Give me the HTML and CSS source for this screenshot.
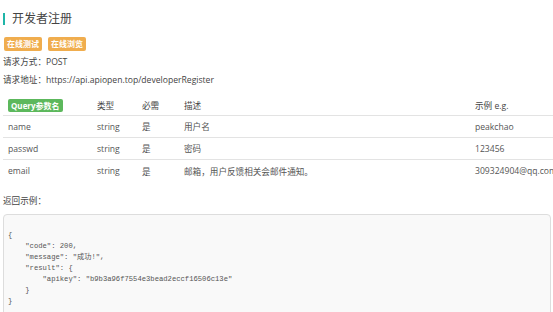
FILE: index.html
```html
<!DOCTYPE html>
<html lang="zh-CN">
<head>
    <meta charset="UTF-8">
    <meta name="viewport" content="width=device-width, initial-scale=1.0">
    <title>开发者注册</title>
    <link rel="stylesheet" href="styles.css">
</head>
<body>
    <h2 class="page-title">开发者注册</h2>

    <div class="badges">
        <span class="badge">在线测试</span>
        <span class="badge">在线浏览</span>
    </div>

    <p class="info-line">请求方式：POST</p>
    <p class="info-line">请求地址：https://api.apiopen.top/developerRegister</p>

    <table class="params-table">
        <colgroup>
            <col class="col-name">
            <col class="col-type">
            <col class="col-required">
            <col class="col-desc">
            <col class="col-example">
        </colgroup>
        <thead>
            <tr>
                <th><span class="query-label">Query参数名</span></th>
                <th>类型</th>
                <th>必需</th>
                <th>描述</th>
                <th>示例 e.g.</th>
            </tr>
        </thead>
        <tbody>
            <tr>
                <td>name</td>
                <td>string</td>
                <td>是</td>
                <td>用户名</td>
                <td>peakchao</td>
            </tr>
            <tr>
                <td>passwd</td>
                <td>string</td>
                <td>是</td>
                <td>密码</td>
                <td>123456</td>
            </tr>
            <tr>
                <td>email</td>
                <td>string</td>
                <td>是</td>
                <td>邮箱，用户反馈相关会邮件通知。</td>
                <td>309324904@qq.com</td>
            </tr>
        </tbody>
    </table>

    <p class="info-line return-title">返回示例：</p>

    <pre class="code-block">{
    "code": 200,
    "message": "成功!",
    "result": {
        "apikey": "b9b3a96f7554e3bead2eccf16506c13e"
    }
}</pre>
</body>
</html>
```

FILE: styles.css
```css
html, body {
    overflow: hidden;
}

body {
    margin: 0;
    padding: 0 0 0 3px;
    font-family: "Open Sans", "Noto Sans CJK SC", sans-serif;
    font-size: 8.6px;
    color: #444;
    background: #fff;
}

.page-title {
    margin: 13px 0 0 0;
    padding-left: 7px;
    border-left: 2px solid #1fb5a8;
    font-size: 12px;
    line-height: 12px;
    font-weight: normal;
    color: #444;
}

.badges {
    margin: 12px 0 0 1px;
    height: 14px;
    display: flex;
    gap: 6px;
}

.badge {
    display: inline-block;
    height: 14px;
    line-height: 14px;
    padding: 0 3px;
    background: #f0ad4e;
    border-radius: 2px;
    color: #fff;
    font-size: 8px;
    font-weight: bold;
}

.info-line {
    margin: 0;
    line-height: 18px;
}

.info-line:first-of-type {
    margin-top: 2px;
}

.params-table {
    margin-top: 6px;
    width: 587px;
    border-collapse: collapse;
    table-layout: fixed;
    color: #555;
}

.col-name { width: 89px; }
.col-type { width: 45px; }
.col-required { width: 42px; }
.col-desc { width: 291px; }
.col-example { width: 120px; }

.params-table th,
.params-table td {
    padding: 0 0 0 5px;
    text-align: left;
    white-space: nowrap;
    font-weight: normal;
}

.params-table th {
    height: 20px;
    color: #444;
    border-bottom: 1px solid #e3e3e3;
}

.params-table td {
    height: 21px;
    border-bottom: 1px solid #e3e3e3;
}

.params-table tbody tr:last-child td {
    border-bottom: none;
    height: 22px;
}

.query-label {
    display: inline-block;
    height: 13px;
    line-height: 13px;
    padding: 0 3px;
    background: #5cb85c;
    border-radius: 2px;
    color: #fff;
    font-size: 8px;
    font-weight: bold;
}

.return-title {
    margin-top: 10px;
}

.code-block {
    margin: 4px 2px 0 0;
    padding: 15px 4px 10px 4px;
    background: #f9f9f9;
    border: 1px solid #ddd;
    border-radius: 4px;
    font-family: "Liberation Mono", "Noto Sans CJK SC", monospace;
    font-size: 7.2px;
    line-height: 11px;
    color: #555;
}
```
